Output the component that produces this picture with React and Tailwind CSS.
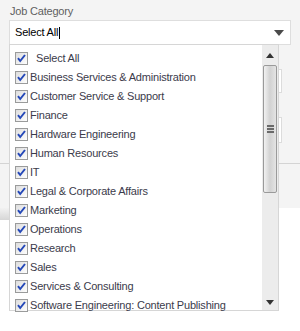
const categories = [
  "Business Services & Administration",
  "Customer Service & Support",
  "Finance",
  "Hardware Engineering",
  "Human Resources",
  "IT",
  "Legal & Corporate Affairs",
  "Marketing",
  "Operations",
  "Research",
  "Sales",
  "Services & Consulting",
  "Software Engineering: Content Publishing",
];

function Checkbox() {
  return (
    <svg width="13" height="13" viewBox="0 0 13 13" className="shrink-0">
      <defs>
        <linearGradient id="cbg" x1="0" y1="0" x2="1" y2="1">
          <stop offset="0" stopColor="#dcdcdc" />
          <stop offset="1" stopColor="#ffffff" />
        </linearGradient>
      </defs>
      <rect x="0.5" y="0.5" width="12" height="12" fill="url(#cbg)" stroke="#9a9b9b" />
      <path
        d="M3 6.2 L5.2 9 L10 3"
        fill="none"
        stroke="#2448b8"
        strokeWidth="2"
      />
    </svg>
  );
}

export default function App() {
  return (
    <div className="relative w-[300px] h-[331px] overflow-hidden bg-white font-['Liberation_Sans',Arial,sans-serif] tracking-[-0.2px]">
      {/* page behind the popup */}
      <div className="h-[208px] bg-[#f4f4f4]">
        <div className="h-[164px] border-b border-[#d4d4d4] px-[9px] pt-[4px]">
          <div className="pl-[1px] text-[11px] leading-[15px] text-[#5f5f5f]">
            Job Category
          </div>
          <div className="mt-[1px] h-[25px] flex items-center justify-between border border-[#dedede] bg-white pl-[5px] pr-[6px]">
            <div className="flex items-center text-[11px] text-black">
              Select All
              <span className="ml-[1px] w-[1px] h-[12px] bg-black" />
            </div>
            <svg width="10" height="6" viewBox="0 0 10 6">
              <path d="M0 0 H10 L5 6 Z" fill="#4a4a4a" />
            </svg>
          </div>
        </div>
      </div>
      <div className="w-[12px] h-[12px] bg-gradient-to-b from-[#f2f2f2] to-[#d6d6d6]" />
      <div className="absolute left-[278px] top-[69px] w-[4px] h-[24px] border border-l-0 border-[#dcdcdc] bg-white" />
      <div className="absolute left-[278px] top-[117px] w-[4px] h-[26px] border border-l-0 border-[#dcdcdc] bg-white" />

      {/* dropdown list */}
      <div className="absolute left-[9px] top-[44px] w-[270px] h-[267px] flex border border-[#d6d6d6] bg-white">
        <div className="flex-1 pt-[4px] pl-[5px] text-[11px] text-[#3b3b4b]">
          <div className="h-[19px] flex items-center">
            <Checkbox />
            <span className="ml-[8px]">Select All</span>
          </div>
          {categories.map((c) => (
            <div key={c} className="h-[19px] flex items-center whitespace-nowrap">
              <Checkbox />
              <span className="ml-[2px]">{c}</span>
            </div>
          ))}
        </div>
        <div className="w-[16px] flex flex-col bg-[#ececec]">
          <div className="h-[20px] flex items-center justify-center">
            <svg width="8" height="5" viewBox="0 0 8 5">
              <path d="M0 5 H8 L4 0 Z" fill="#333" />
            </svg>
          </div>
          <div className="h-[128px] mx-[1px] flex items-center justify-center border border-[#9a9a9a] rounded-[2px] bg-gradient-to-r from-[#f2f2f2] via-[#d2d2d2] to-[#e4e4e4]">
            <div className="flex flex-col gap-[1px]">
              <div className="w-[7px] h-[2px] bg-[#6a6a6a]" />
              <div className="w-[7px] h-[2px] bg-[#6a6a6a]" />
              <div className="w-[7px] h-[2px] bg-[#6a6a6a]" />
            </div>
          </div>
          <div className="flex-1" />
          <div className="h-[16px] flex items-center justify-center">
            <svg width="8" height="5" viewBox="0 0 8 5">
              <path d="M0 0 H8 L4 5 Z" fill="#333" />
            </svg>
          </div>
        </div>
      </div>
    </div>
  );
}
